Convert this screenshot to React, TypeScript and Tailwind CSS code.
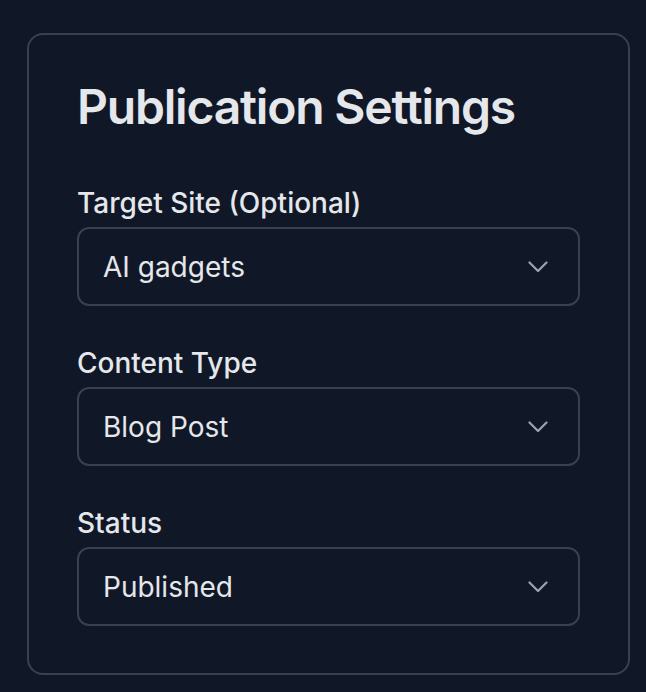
import React from "react";

function Chevron() {
  return (
    <svg width="20" height="12" viewBox="0 0 20 12" fill="none" stroke="#9ca3af" strokeWidth="2.2" strokeLinecap="round" strokeLinejoin="round">
      <path d="M1.5 1.5l8.5 8.5 8.5-8.5" />
    </svg>
  );
}

function Field({ label, value }: { label: string; value: string }) {
  return (
    <div className="flex flex-col gap-[6px]">
      <div className="text-[28px] leading-[36px] font-medium text-gray-200">{label}</div>
      <div className="h-[79px] rounded-[12px] border-2 border-gray-700 flex items-center justify-between pl-[24px] pr-[30px]">
        <span className="text-[28px] text-gray-200">{value}</span>
        <Chevron />
      </div>
    </div>
  );
}

export default function App() {
  return (
    <div className="min-h-[692px] bg-gray-900 pl-[27px] pt-[33px]" style={{ fontFamily: "Inter, sans-serif" }}>
      <div className="w-[603px] h-[642px] rounded-[16px] border-2 border-gray-700 px-[48px] pt-[48px]">
        <h1 className="text-[48px] leading-[48px] font-semibold tracking-tight text-gray-200 mb-[54px]">Publication Settings</h1>
        <div className="flex flex-col gap-[39px]">
          <Field label="Target Site (Optional)" value="AI gadgets" />
          <Field label="Content Type" value="Blog Post" />
          <Field label="Status" value="Published" />
        </div>
      </div>
    </div>
  );
}
